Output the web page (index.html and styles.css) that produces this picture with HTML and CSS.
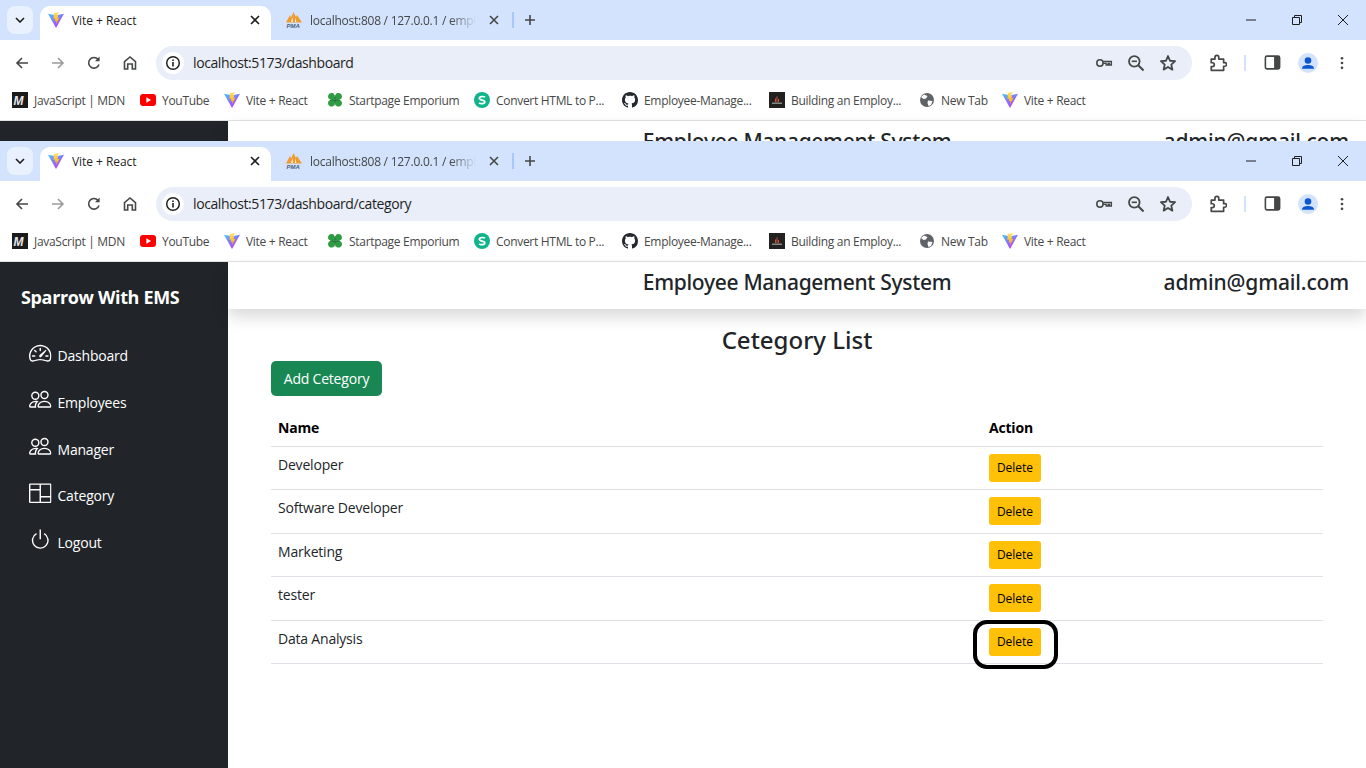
FILE: index.html
```html
<!DOCTYPE html>
<html lang="en">
<head>
  <meta charset="UTF-8">
  <title>Category List</title>
  <link rel="stylesheet" href="styles.css">
</head>
<body>
  <svg class="defs" width="0" height="0">
    <defs>
      <linearGradient id="viteBlue" x1="0" y1="0" x2=".7" y2="1">
        <stop offset="0" stop-color="#41c8ff"/>
        <stop offset=".6" stop-color="#8f6bff"/>
        <stop offset="1" stop-color="#bd34fe"/>
      </linearGradient>
      <linearGradient id="viteGold" x1="0" y1="0" x2="0" y2="1">
        <stop offset="0" stop-color="#ffe266"/>
        <stop offset="1" stop-color="#ffa800"/>
      </linearGradient>
      <symbol id="vite" viewBox="0 0 16 16">
        <path fill="url(#viteBlue)" d="M0 1.800 8 3.200l8-1.400-8 14.200z"/>
        <path fill="url(#viteGold)" d="M11.400 0 5.800 1.100l-.3 5.800 1.800-.4-.5 2.800 1.600-.4-.5 3.300 3.500-6.200-1.900.3.800-3.200-1.800.3z"/>
      </symbol>
      <symbol id="pma" viewBox="0 0 16 16">
        <path fill="#f09a30" d="M0 10.500 4 3l1 2.500L7.500 0 10 5l1-2 5 7.500z"/>
        <path fill="#fff" d="M5.200 10 6.300 5l.5 5zM9 10l.4-4.500.9 4.500z"/>
        <text x=".5" y="15.500" font-size="6" font-weight="700" font-style="italic" font-family="Liberation Sans" fill="#46627f">PMA</text>
      </symbol>
      <symbol id="close" viewBox="0 0 12 12">
        <path d="M2 2l8 8M10 2l-8 8" fill="none" stroke="currentColor" stroke-width="1.600"/>
      </symbol>
      <symbol id="back" viewBox="0 0 16 16">
        <path d="M14 8H3M8 3 3 8l5 5" fill="none" stroke="currentColor" stroke-width="1.600"/>
      </symbol>
      <symbol id="forward" viewBox="0 0 16 16">
        <path d="M2 8h11M8 3l5 5-5 5" fill="none" stroke="currentColor" stroke-width="1.600"/>
      </symbol>
      <symbol id="reload" viewBox="0 0 16 16">
        <path d="M13 9.500A5.300 5.300 0 1 1 12 4.400" fill="none" stroke="currentColor" stroke-width="1.600"/>
        <path d="M13.600 1.600v4.600H9z" fill="currentColor"/>
      </symbol>
      <symbol id="home" viewBox="0 0 16 16">
        <path d="M2.500 14V6.600L8 2l5.500 4.600V14H10.300V9H5.700v5z" fill="none" stroke="currentColor" stroke-width="1.600"/>
      </symbol>
      <symbol id="info" viewBox="0 0 16 16">
        <circle cx="8" cy="8" r="6.300" fill="none" stroke="currentColor" stroke-width="1.500"/>
        <path d="M8 7v4.500M8 4.400v1.500" stroke="currentColor" stroke-width="1.600"/>
      </symbol>
      <symbol id="key" viewBox="0 0 20 20">
        <circle cx="5.500" cy="10" r="3.500" fill="none" stroke="currentColor" stroke-width="1.700"/>
        <path d="M9 8.300h9.200v3.900h-2.200v-1.800h-1.400v1.800h-2.200v-1.800H9" fill="none" stroke="currentColor" stroke-width="1.500"/>
      </symbol>
      <symbol id="zoomout" viewBox="0 0 16 16">
        <circle cx="6.500" cy="6.500" r="4.700" fill="none" stroke="currentColor" stroke-width="1.600"/>
        <path d="M10 10l4.700 4.700" stroke="currentColor" stroke-width="1.800"/>
        <path d="M4.200 6.500h4.600" stroke="currentColor" stroke-width="1.400"/>
      </symbol>
      <symbol id="star" viewBox="0 0 16 16">
        <path d="M8 1.800l1.800 4.200 4.500.4-3.400 3 1 4.500L8 11.500l-3.900 2.400 1-4.500-3.400-3 4.500-.4z" fill="none" stroke="currentColor" stroke-width="1.600" stroke-linejoin="round"/>
      </symbol>
      <symbol id="puzzle" viewBox="0 0 16 16">
        <path d="M2 4.500h3.300V3a1.700 1.700 0 0 1 3.400 0v1.500H13v3.200h1a1.600 1.600 0 0 1 0 3.200h-1v3.600H2v-3.300h1a1.700 1.700 0 0 0 0-3.400H2z" fill="none" stroke="currentColor" stroke-width="1.500" stroke-linejoin="round"/>
      </symbol>
      <symbol id="panel" viewBox="0 0 16 16">
        <rect x="1.300" y="2" width="13.400" height="12" rx="1.500" fill="none" stroke="currentColor" stroke-width="1.500"/>
        <path d="M9.500 2h4a1.500 1.500 0 0 1 1.500 1.500v9a1.500 1.500 0 0 1-1.500 1.500h-4z" fill="currentColor"/>
      </symbol>
      <symbol id="avatar" viewBox="0 0 20 20">
        <circle cx="10" cy="10" r="10" fill="#d3e3fd"/>
        <circle cx="10" cy="7.500" r="3.300" fill="#0b57d0"/>
        <path d="M4 15.800c0-2.800 3-3.800 6-3.800s6 1 6 3.800z" fill="#0b57d0"/>
      </symbol>
      <symbol id="dots" viewBox="0 0 16 16">
        <circle cx="8" cy="2.500" r="1.500" fill="currentColor"/>
        <circle cx="8" cy="8" r="1.500" fill="currentColor"/>
        <circle cx="8" cy="13.500" r="1.500" fill="currentColor"/>
      </symbol>
      <symbol id="mdn" viewBox="0 0 16 16">
        <rect width="16" height="16" fill="#1b1b1b"/>
        <text x="1.500" y="12.500" font-size="12" font-weight="700" font-style="italic" font-family="Liberation Sans" fill="#e8e8e8">M</text>
      </symbol>
      <symbol id="youtube" viewBox="0 0 16 16">
        <rect y="2" width="16" height="12" rx="3" fill="#f00"/>
        <path d="M6.400 5.300v5.400L11 8z" fill="#fff"/>
      </symbol>
      <symbol id="clover" viewBox="0 0 16 16">
        <path fill="#2e9c43" d="M8 7.500C4 8 1 7.500 1 4.500S4 .5 5.500 1 8 3 8 7.500zM8 7.500C12 8 15 7.500 15 4.500S12 .5 10.500 1 8 3 8 7.500zM8 8C4 7.500 1 8 1 11s3 4 4.500 3.500S8 12.500 8 8zM8 8c4-.5 7 0 7 3s-3 4-4.500 3.500S8 12.500 8 8z"/>
        <path d="M8 3v10.500M3 8h10" stroke="#156428" stroke-width=".8"/>
      </symbol>
      <symbol id="sbadge" viewBox="0 0 16 16">
        <circle cx="8" cy="8" r="8" fill="#10b48a"/>
        <path d="M11 5.200C10 4.300 5.300 4 5.300 6.300c0 2.400 5.500 1.200 5.500 3.600 0 2.200-4.500 2-5.800 1" fill="none" stroke="#fff" stroke-width="1.700"/>
      </symbol>
      <symbol id="github" viewBox="0 0 16 16">
        <path fill="#24292f" d="M8 0C3.580 0 0 3.580 0 8c0 3.540 2.290 6.530 5.470 7.590.4.070.55-.17.55-.38 0-.19-.01-.82-.01-1.490-2.010.37-2.530-.49-2.690-.94-.09-.23-.48-.94-.82-1.130-.28-.15-.68-.52-.01-.53.63-.01 1.080.58 1.230.82.720 1.210 1.870.870 2.330.660.070-.520.280-.870.510-1.070-1.780-.2-3.640-.89-3.640-3.950 0-.870.310-1.590.820-2.150-.080-.2-.360-1.020.080-2.120 0 0 .670-.210 2.200.820.640-.180 1.320-.270 2-.270s1.360.090 2 .270c1.530-1.040 2.200-.820 2.200-.820.440 1.100.160 1.920.080 2.120.510.560.820 1.270.820 2.150 0 3.070-1.870 3.750-3.650 3.950.290.250.540.730.540 1.480 0 1.070-.010 1.930-.010 2.200 0 .210.150.460.550.380A8.010 8.010 0 0 0 16 8c0-4.420-3.580-8-8-8z"/>
      </symbol>
      <symbol id="building" viewBox="0 0 16 16">
        <rect width="16" height="16" fill="#23211f"/>
        <path d="M3 10.500h10v1.500H3z" fill="#888"/>
        <path d="M6.500 10V6.500M8 10V4.500M9.500 10V7" stroke="#d05040" stroke-width="1"/>
      </symbol>
      <symbol id="globe" viewBox="0 0 16 16">
        <circle cx="8" cy="8" r="7" fill="#5f6368"/>
        <path d="M5 2.500 8.500 4 7 6.500 4.500 7 2 5zM9 8.500l4.500.5-1.500 4-2.500 1-1-3z" fill="#fff"/>
      </symbol>
      <symbol id="speedometer" viewBox="0 0 16 16">
        <path d="M8 4a.5.5 0 0 1 .5.5V6a.5.5 0 0 1-1 0V4.500A.5.5 0 0 1 8 4M3.732 5.732a.5.5 0 0 1 .707 0l.915.914a.5.5 0 1 1-.708.708l-.914-.915a.5.5 0 0 1 0-.707M2 10a.5.5 0 0 1 .5-.5h1.586a.5.5 0 0 1 0 1H2.500A.5.5 0 0 1 2 10m9.500 0a.5.5 0 0 1 .5-.5h1.500a.5.5 0 0 1 0 1H12a.5.5 0 0 1-.5-.5m.754-4.246a.39.39 0 0 0-.527-.02L7.547 9.310a.91.91 0 1 0 1.302 1.258l3.434-4.297a.39.39 0 0 0-.029-.518z"/>
        <path fill-rule="evenodd" d="M0 10a8 8 0 1 1 15.547 2.661c-.442 1.253-1.845 1.602-2.932 1.250C11.309 13.488 9.475 13 8 13c-1.474 0-3.310.488-4.615.911-1.087.352-2.490.003-2.932-1.250A8 8 0 0 1 0 10m8-7a7 7 0 0 0-6.603 9.329c.203.575.923.876 1.680.630C4.397 12.533 6.358 12 8 12s3.604.532 4.923.960c.757.245 1.477-.056 1.680-.631A7 7 0 0 0 8 3"/>
      </symbol>
      <symbol id="people" viewBox="0 0 16 16">
        <path d="M15 14s1 0 1-1-1-4-5-4-5 3-5 4 1 1 1 1zm-7.978-1L7 12.996c.001-.264.167-1.030.760-1.720C8.312 10.629 9.282 10 11 10c1.717 0 2.687.630 3.240 1.276.593.690.758 1.457.760 1.720l-.008.002-.014.002H7.022zM11 7a2 2 0 1 0 0-4 2 2 0 0 0 0 4m3-2a3 3 0 1 1-6 0 3 3 0 0 1 6 0M6.936 9.280a6 6 0 0 0-1.230-.247A7 7 0 0 0 5 9c-4 0-5 3-5 4q0 1 1 1h4.216A2.240 2.240 0 0 1 5 13c0-1.010.377-2.042 1.090-2.904.243-.294.526-.569.846-.816M4.920 10A5.500 5.500 0 0 0 4 13H1c0-.260.164-1.030.760-1.724.545-.636 1.492-1.256 3.160-1.275ZM1.500 5.500a3 3 0 1 1 6 0 3 3 0 0 1-6 0m3-2a2 2 0 1 0 0 4 2 2 0 0 0 0-4"/>
      </symbol>
      <symbol id="columns" viewBox="0 0 16 16">
        <path d="M0 2a1 1 0 0 1 1-1h14a1 1 0 0 1 1 1v12a1 1 0 0 1-1 1H1a1 1 0 0 1-1-1zm8.500 0v8H15V2zm0 9v3H15v-3zm-1-9H1v3h6.500zM1 14h6.500V6H1z"/>
      </symbol>
      <symbol id="power" viewBox="0 0 16 16">
        <path d="M7.500 1v7h1V1z"/>
        <path d="M3 8.812a5 5 0 0 1 2.578-4.375l-.485-.874A6 6 0 1 0 11 3.616l-.501.865A5 5 0 1 1 3 8.812"/>
      </symbol>
    </defs>
  </svg>

  <!-- window behind -->
  <section class="window window-back">
    <div class="tabstrip">
      <button class="tab-search"><svg class="chev" viewBox="0 0 10 6"><path d="M1 1l4 4 4-4" fill="none" stroke="currentColor" stroke-width="1.600"/></svg></button>
      <div class="tab tab-active"><svg class="fav"><use href="#vite"/></svg><span class="tab-title">Vite + React</span><svg class="tab-x"><use href="#close"/></svg></div>
      <div class="tab tab-idle"><svg class="fav"><use href="#pma"/></svg><span class="tab-title tab-fade">localhost:808 / 127.0.0.1 / employeems</span><svg class="tab-x"><use href="#close"/></svg></div>
      <span class="tab-sep"></span>
      <svg class="tab-new" viewBox="0 0 12 12"><path d="M6 1v10M1 6h10" stroke="currentColor" stroke-width="1.600"/></svg>
      <div class="win-controls">
        <svg class="win-btn" viewBox="0 0 12 12"><path d="M1 6h10" stroke="currentColor"/></svg>
        <svg class="win-btn" viewBox="0 0 12 12"><path d="M1.500 3.500h7v7h-7zM3.500 3.500v-2h7v7h-2" fill="none" stroke="currentColor"/></svg>
        <svg class="win-btn" viewBox="0 0 12 12"><path d="M1 1l10 10M11 1 1 11" stroke="currentColor"/></svg>
      </div>
    </div>
    <div class="toolbar">
      <svg class="tool"><use href="#back"/></svg>
      <svg class="tool tool-off"><use href="#forward"/></svg>
      <svg class="tool"><use href="#reload"/></svg>
      <svg class="tool"><use href="#home"/></svg>
      <div class="omnibox">
        <span class="site-info"><svg class="info"><use href="#info"/></svg></span>
        <span class="url">localhost:5173/dashboard</span>
        <svg class="omni-icon"><use href="#key"/></svg>
        <svg class="omni-icon"><use href="#zoomout"/></svg>
        <svg class="omni-icon"><use href="#star"/></svg>
      </div>
      <svg class="tool tool-ext"><use href="#puzzle"/></svg>
      <span class="tool-sep"></span>
      <svg class="tool tool-panel"><use href="#panel"/></svg>
      <svg class="tool tool-avatar"><use href="#avatar"/></svg>
      <svg class="tool tool-dots"><use href="#dots"/></svg>
    </div>
    <div class="bookmarks">
      <div class="bm"><svg class="fav"><use href="#mdn"/></svg><span>JavaScript | MDN</span></div>
      <div class="bm"><svg class="fav"><use href="#youtube"/></svg><span>YouTube</span></div>
      <div class="bm"><svg class="fav"><use href="#vite"/></svg><span>Vite + React</span></div>
      <div class="bm"><svg class="fav"><use href="#clover"/></svg><span>Startpage Emporium</span></div>
      <div class="bm"><svg class="fav"><use href="#sbadge"/></svg><span>Convert HTML to P...</span></div>
      <div class="bm"><svg class="fav"><use href="#github"/></svg><span>Employee-Manage...</span></div>
      <div class="bm"><svg class="fav"><use href="#building"/></svg><span>Building an Employ...</span></div>
      <div class="bm"><svg class="fav"><use href="#globe"/></svg><span>New Tab</span></div>
      <div class="bm"><svg class="fav"><use href="#vite"/></svg><span>Vite + React</span></div>
    </div>
    <div class="page">
      <aside class="sidebar"></aside>
      <div class="main">
        <header class="topbar">
          <span class="topbar-title">Employee Management System</span>
          <span class="topbar-user">admin@gmail.com</span>
        </header>
      </div>
    </div>
  </section>

  <!-- window in front -->
  <section class="window window-front">
    <div class="tabstrip">
      <button class="tab-search"><svg class="chev" viewBox="0 0 10 6"><path d="M1 1l4 4 4-4" fill="none" stroke="currentColor" stroke-width="1.600"/></svg></button>
      <div class="tab tab-active"><svg class="fav"><use href="#vite"/></svg><span class="tab-title">Vite + React</span><svg class="tab-x"><use href="#close"/></svg></div>
      <div class="tab tab-idle"><svg class="fav"><use href="#pma"/></svg><span class="tab-title tab-fade">localhost:808 / 127.0.0.1 / employeems</span><svg class="tab-x"><use href="#close"/></svg></div>
      <span class="tab-sep"></span>
      <svg class="tab-new" viewBox="0 0 12 12"><path d="M6 1v10M1 6h10" stroke="currentColor" stroke-width="1.600"/></svg>
      <div class="win-controls">
        <svg class="win-btn" viewBox="0 0 12 12"><path d="M1 6h10" stroke="currentColor"/></svg>
        <svg class="win-btn" viewBox="0 0 12 12"><path d="M1.500 3.500h7v7h-7zM3.500 3.500v-2h7v7h-2" fill="none" stroke="currentColor"/></svg>
        <svg class="win-btn" viewBox="0 0 12 12"><path d="M1 1l10 10M11 1 1 11" stroke="currentColor"/></svg>
      </div>
    </div>
    <div class="toolbar">
      <svg class="tool"><use href="#back"/></svg>
      <svg class="tool tool-off"><use href="#forward"/></svg>
      <svg class="tool"><use href="#reload"/></svg>
      <svg class="tool"><use href="#home"/></svg>
      <div class="omnibox">
        <span class="site-info"><svg class="info"><use href="#info"/></svg></span>
        <span class="url">localhost:5173/dashboard/category</span>
        <svg class="omni-icon"><use href="#key"/></svg>
        <svg class="omni-icon"><use href="#zoomout"/></svg>
        <svg class="omni-icon"><use href="#star"/></svg>
      </div>
      <svg class="tool tool-ext"><use href="#puzzle"/></svg>
      <span class="tool-sep"></span>
      <svg class="tool tool-panel"><use href="#panel"/></svg>
      <svg class="tool tool-avatar"><use href="#avatar"/></svg>
      <svg class="tool tool-dots"><use href="#dots"/></svg>
    </div>
    <div class="bookmarks">
      <div class="bm"><svg class="fav"><use href="#mdn"/></svg><span>JavaScript | MDN</span></div>
      <div class="bm"><svg class="fav"><use href="#youtube"/></svg><span>YouTube</span></div>
      <div class="bm"><svg class="fav"><use href="#vite"/></svg><span>Vite + React</span></div>
      <div class="bm"><svg class="fav"><use href="#clover"/></svg><span>Startpage Emporium</span></div>
      <div class="bm"><svg class="fav"><use href="#sbadge"/></svg><span>Convert HTML to P...</span></div>
      <div class="bm"><svg class="fav"><use href="#github"/></svg><span>Employee-Manage...</span></div>
      <div class="bm"><svg class="fav"><use href="#building"/></svg><span>Building an Employ...</span></div>
      <div class="bm"><svg class="fav"><use href="#globe"/></svg><span>New Tab</span></div>
      <div class="bm"><svg class="fav"><use href="#vite"/></svg><span>Vite + React</span></div>
    </div>
    <div class="page">
      <aside class="sidebar">
        <div class="brand">Sparrow With EMS</div>
        <nav class="side-nav">
          <a class="side-link"><svg class="side-icon"><use href="#speedometer"/></svg><span>Dashboard</span></a>
          <a class="side-link"><svg class="side-icon"><use href="#people"/></svg><span>Employees</span></a>
          <a class="side-link"><svg class="side-icon"><use href="#people"/></svg><span>Manager</span></a>
          <a class="side-link"><svg class="side-icon"><use href="#columns"/></svg><span>Category</span></a>
          <a class="side-link"><svg class="side-icon"><use href="#power"/></svg><span>Logout</span></a>
        </nav>
      </aside>
      <div class="main">
        <header class="topbar">
          <span class="topbar-title">Employee Management System</span>
          <span class="topbar-user">admin@gmail.com</span>
        </header>
        <div class="content">
          <h3 class="content-title">Cetegory List</h3>
          <button class="btn-add">Add Cetegory</button>
          <table class="cat-table">
            <thead>
              <tr><th class="col-name">Name</th><th>Action</th></tr>
            </thead>
            <tbody>
              <tr><td>Developer</td><td><button class="btn-delete">Delete</button></td></tr>
              <tr><td>Software Developer</td><td><button class="btn-delete">Delete</button></td></tr>
              <tr><td>Marketing</td><td><button class="btn-delete">Delete</button></td></tr>
              <tr><td>tester</td><td><button class="btn-delete">Delete</button></td></tr>
              <tr><td>Data Analysis</td><td><span class="circled"><button class="btn-delete">Delete</button></span></td></tr>
            </tbody>
          </table>
        </div>
      </div>
    </div>
  </section>
</body>
</html>
```

FILE: styles.css
```css
html, body {
  height: 100%;
  margin: 0;
  padding: 0;
  overflow: hidden;
  background-color: #fff;
  font-family: "Open Sans", "Noto Sans", sans-serif;
  color: #212529;
}

.defs {
  display: block;
  height: 0;
}

.window {
  display: flex;
  flex-direction: column;
  overflow: hidden;
}

.window-back {
  height: 141px;
}

.window-front {
  height: 627px;
}

/* tab strip */
.tabstrip {
  display: flex;
  align-items: flex-end;
  flex: none;
  height: 40px;
  background-color: #d3e3fd;
  font-size: 12px;
}

.tab-search {
  align-self: flex-start;
  display: flex;
  align-items: center;
  justify-content: center;
  width: 26px;
  height: 28px;
  margin: 6px 7px 0 7px;
  padding: 0;
  border: none;
  border-radius: 8px;
  background-color: #e9f1fe;
  color: #1f1f1f;
}

.chev {
  width: 10px;
  height: 6px;
}

.tab {
  display: flex;
  align-items: center;
  height: 34px;
  box-sizing: border-box;
  padding: 0 8px 6px 8px;
}

.tab-active {
  width: 231px;
  background-color: #fff;
  border-radius: 10px 10px 0 0;
  color: #1f1f1f;
}

.tab-idle {
  width: 239px;
  padding-left: 15px;
  color: #444746;
}

.fav {
  flex: none;
  width: 16px;
  height: 16px;
}

.tab-title {
  flex: 1;
  min-width: 0;
  margin-left: 8px;
  overflow: hidden;
  white-space: nowrap;
  letter-spacing: -0.05px;
}

.tab-fade {
  margin-right: 12px;
  letter-spacing: -0.25px;
  -webkit-mask-image: linear-gradient(to right, #000 85%, transparent);
  mask-image: linear-gradient(to right, #000 85%, transparent);
}

.tab-x {
  flex: none;
  width: 12px;
  height: 12px;
  margin-right: 2px;
}

.tab-sep {
  align-self: flex-start;
  width: 2px;
  height: 16px;
  margin: 12px 0 0 2px;
  background-color: #a8c7fa;
}

.tab-new {
  align-self: flex-start;
  width: 12px;
  height: 12px;
  margin: 14px 0 0 10px;
  color: #444746;
}

.win-controls {
  display: flex;
  gap: 34px;
  align-self: flex-start;
  margin: 14px 17px 0 auto;
  color: #1f1f1f;
}

.win-btn {
  width: 12px;
  height: 12px;
}

/* toolbar */
.toolbar {
  display: flex;
  align-items: center;
  flex: none;
  height: 41px;
  box-sizing: border-box;
  padding: 4px 0 0 14px;
  background-color: #fff;
  border-radius: 10px 10px 0 0;
  color: #444746;
}

.tool {
  flex: none;
  width: 16px;
  height: 16px;
  margin-right: 20px;
}

.tool-off {
  color: #9a9b9c;
}

.omnibox {
  flex: none;
  display: flex;
  align-items: center;
  box-sizing: border-box;
  width: 1036px;
  height: 34px;
  margin: 1px 0 0 -2px;
  padding: 0 15px 0 6px;
  background-color: #e9eef8;
  border-radius: 17px;
}

.site-info {
  display: flex;
  align-items: center;
  justify-content: center;
  width: 22px;
  height: 22px;
  background-color: #fff;
  border-radius: 50%;
  color: #1f1f1f;
}

.info {
  width: 16px;
  height: 16px;
}

.url {
  flex: 1;
  margin-left: 9px;
  font-size: 14px;
  line-height: 18px;
  margin-bottom: 1px;
  letter-spacing: -0.4px;
  color: #1f1f1f;
}

.omni-icon {
  width: 18px;
  height: 18px;
  margin-left: 14px;
}

.tool-ext {
  width: 18px;
  height: 18px;
  margin: 0 17px 0 17px;
}

.tool-sep {
  width: 2px;
  height: 16px;
  margin-right: 18px;
  background-color: #d3e3fd;
}

.tool-panel {
  width: 17px;
  height: 17px;
  margin-right: 17px;
}

.tool-avatar {
  width: 20px;
  height: 20px;
  margin-right: 17px;
}

.tool-dots {
  width: 14px;
  height: 14px;
  margin: 0;
}

/* bookmarks */
.bookmarks {
  display: grid;
  grid-template-columns: 128px 84px 103px 147px 148px 147px 150px 83px 87px;
  align-items: center;
  flex: none;
  height: 39px;
  box-sizing: content-box;
  padding: 0 0 0 12px;
  background-color: #fff;
  border-bottom: 1px solid #e1e1e1;
  font-size: 12px;
  color: #474747;
}

.bm {
  display: flex;
  align-items: center;
  gap: 6px;
  margin-bottom: 1px;
  white-space: nowrap;
  letter-spacing: -0.3px;
}

/* page */
.page {
  display: flex;
  flex: 1;
  min-height: 0;
  font-size: 14px;
}

.sidebar {
  flex: none;
  width: 228px;
  background-color: #212529;
  color: #fff;
}

.brand {
  margin: 23px 0 0 21px;
  font-size: 18px;
  line-height: 24px;
  font-weight: 700;
  letter-spacing: -0.35px;
  white-space: nowrap;
}

.side-nav {
  display: flex;
  flex-direction: column;
  margin: 20.500px 0 0 29px;
}

.side-link {
  display: flex;
  align-items: flex-end;
  gap: 6px;
  height: 46.700px;
  box-sizing: border-box;
  padding-bottom: 10px;
  font-size: 14px;
  line-height: 20px;
  letter-spacing: -0.2px;
}

.side-icon {
  flex: none;
  width: 22.500px;
  height: 22.500px;
  margin-bottom: 2px;
  fill: #fff;
}

.main {
  flex: 1;
  display: flex;
  flex-direction: column;
  min-width: 0;
}

.topbar {
  position: relative;
  display: flex;
  align-items: center;
  justify-content: center;
  flex: none;
  height: 47px;
  padding-bottom: 7px;
  box-sizing: border-box;
  box-shadow: 0 8px 16px rgba(0, 0, 0, 0.15);
  font-family: "Noto Sans", sans-serif;
  font-size: 21px;
  font-weight: 500;
  line-height: 30px;
  letter-spacing: -0.3px;
}

.topbar-user {
  position: absolute;
  right: 17px;
  top: 5px;
  letter-spacing: -0.15px;
}

.content {
  padding: 15px 43px 0 43px;
}

.content-title {
  margin: 0;
  font-family: "Noto Sans", sans-serif;
  font-size: 24px;
  line-height: 32px;
  font-weight: 500;
  text-align: center;
}

.btn-add {
  display: block;
  width: 111px;
  height: 35px;
  margin-top: 5px;
  padding: 0;
  border: none;
  border-radius: 5px;
  background-color: #198754;
  color: #fff;
  font-family: inherit;
  font-size: 14px;
  letter-spacing: -0.2px;
}

.cat-table {
  width: 1052px;
  margin-top: 15px;
  border-collapse: collapse;
  table-layout: fixed;
  font-size: 14px;
  letter-spacing: -0.2px;
  color: #212529;
}

.cat-table th {
  height: 35px;
  padding: 0 7px 2px;
  box-sizing: border-box;
  text-align: left;
  font-weight: 700;
  color: #000;
  border-bottom: 1px solid #dee2e6;
}

.col-name {
  width: 711px;
}

.cat-table td {
  padding: 7px 7px 0;
  vertical-align: top;
  line-height: 21px;
  border-bottom: 1px solid #dee2e6;
}

.btn-delete {
  display: block;
  width: 52px;
  height: 28px;
  padding: 0;
  margin-bottom: 7.600px;
  border: none;
  border-radius: 3px;
  background-color: #ffc107;
  color: #000;
  font-family: inherit;
  font-size: 12px;
}

/* hand drawn mark around the last delete button */
.circled {
  position: relative;
  display: block;
  width: 52px;
}

.circled::after {
  content: "";
  position: absolute;
  left: -16px;
  top: -8px;
  width: 77px;
  height: 41px;
  border: 4px solid #000;
  border-radius: 14px;
}
```
